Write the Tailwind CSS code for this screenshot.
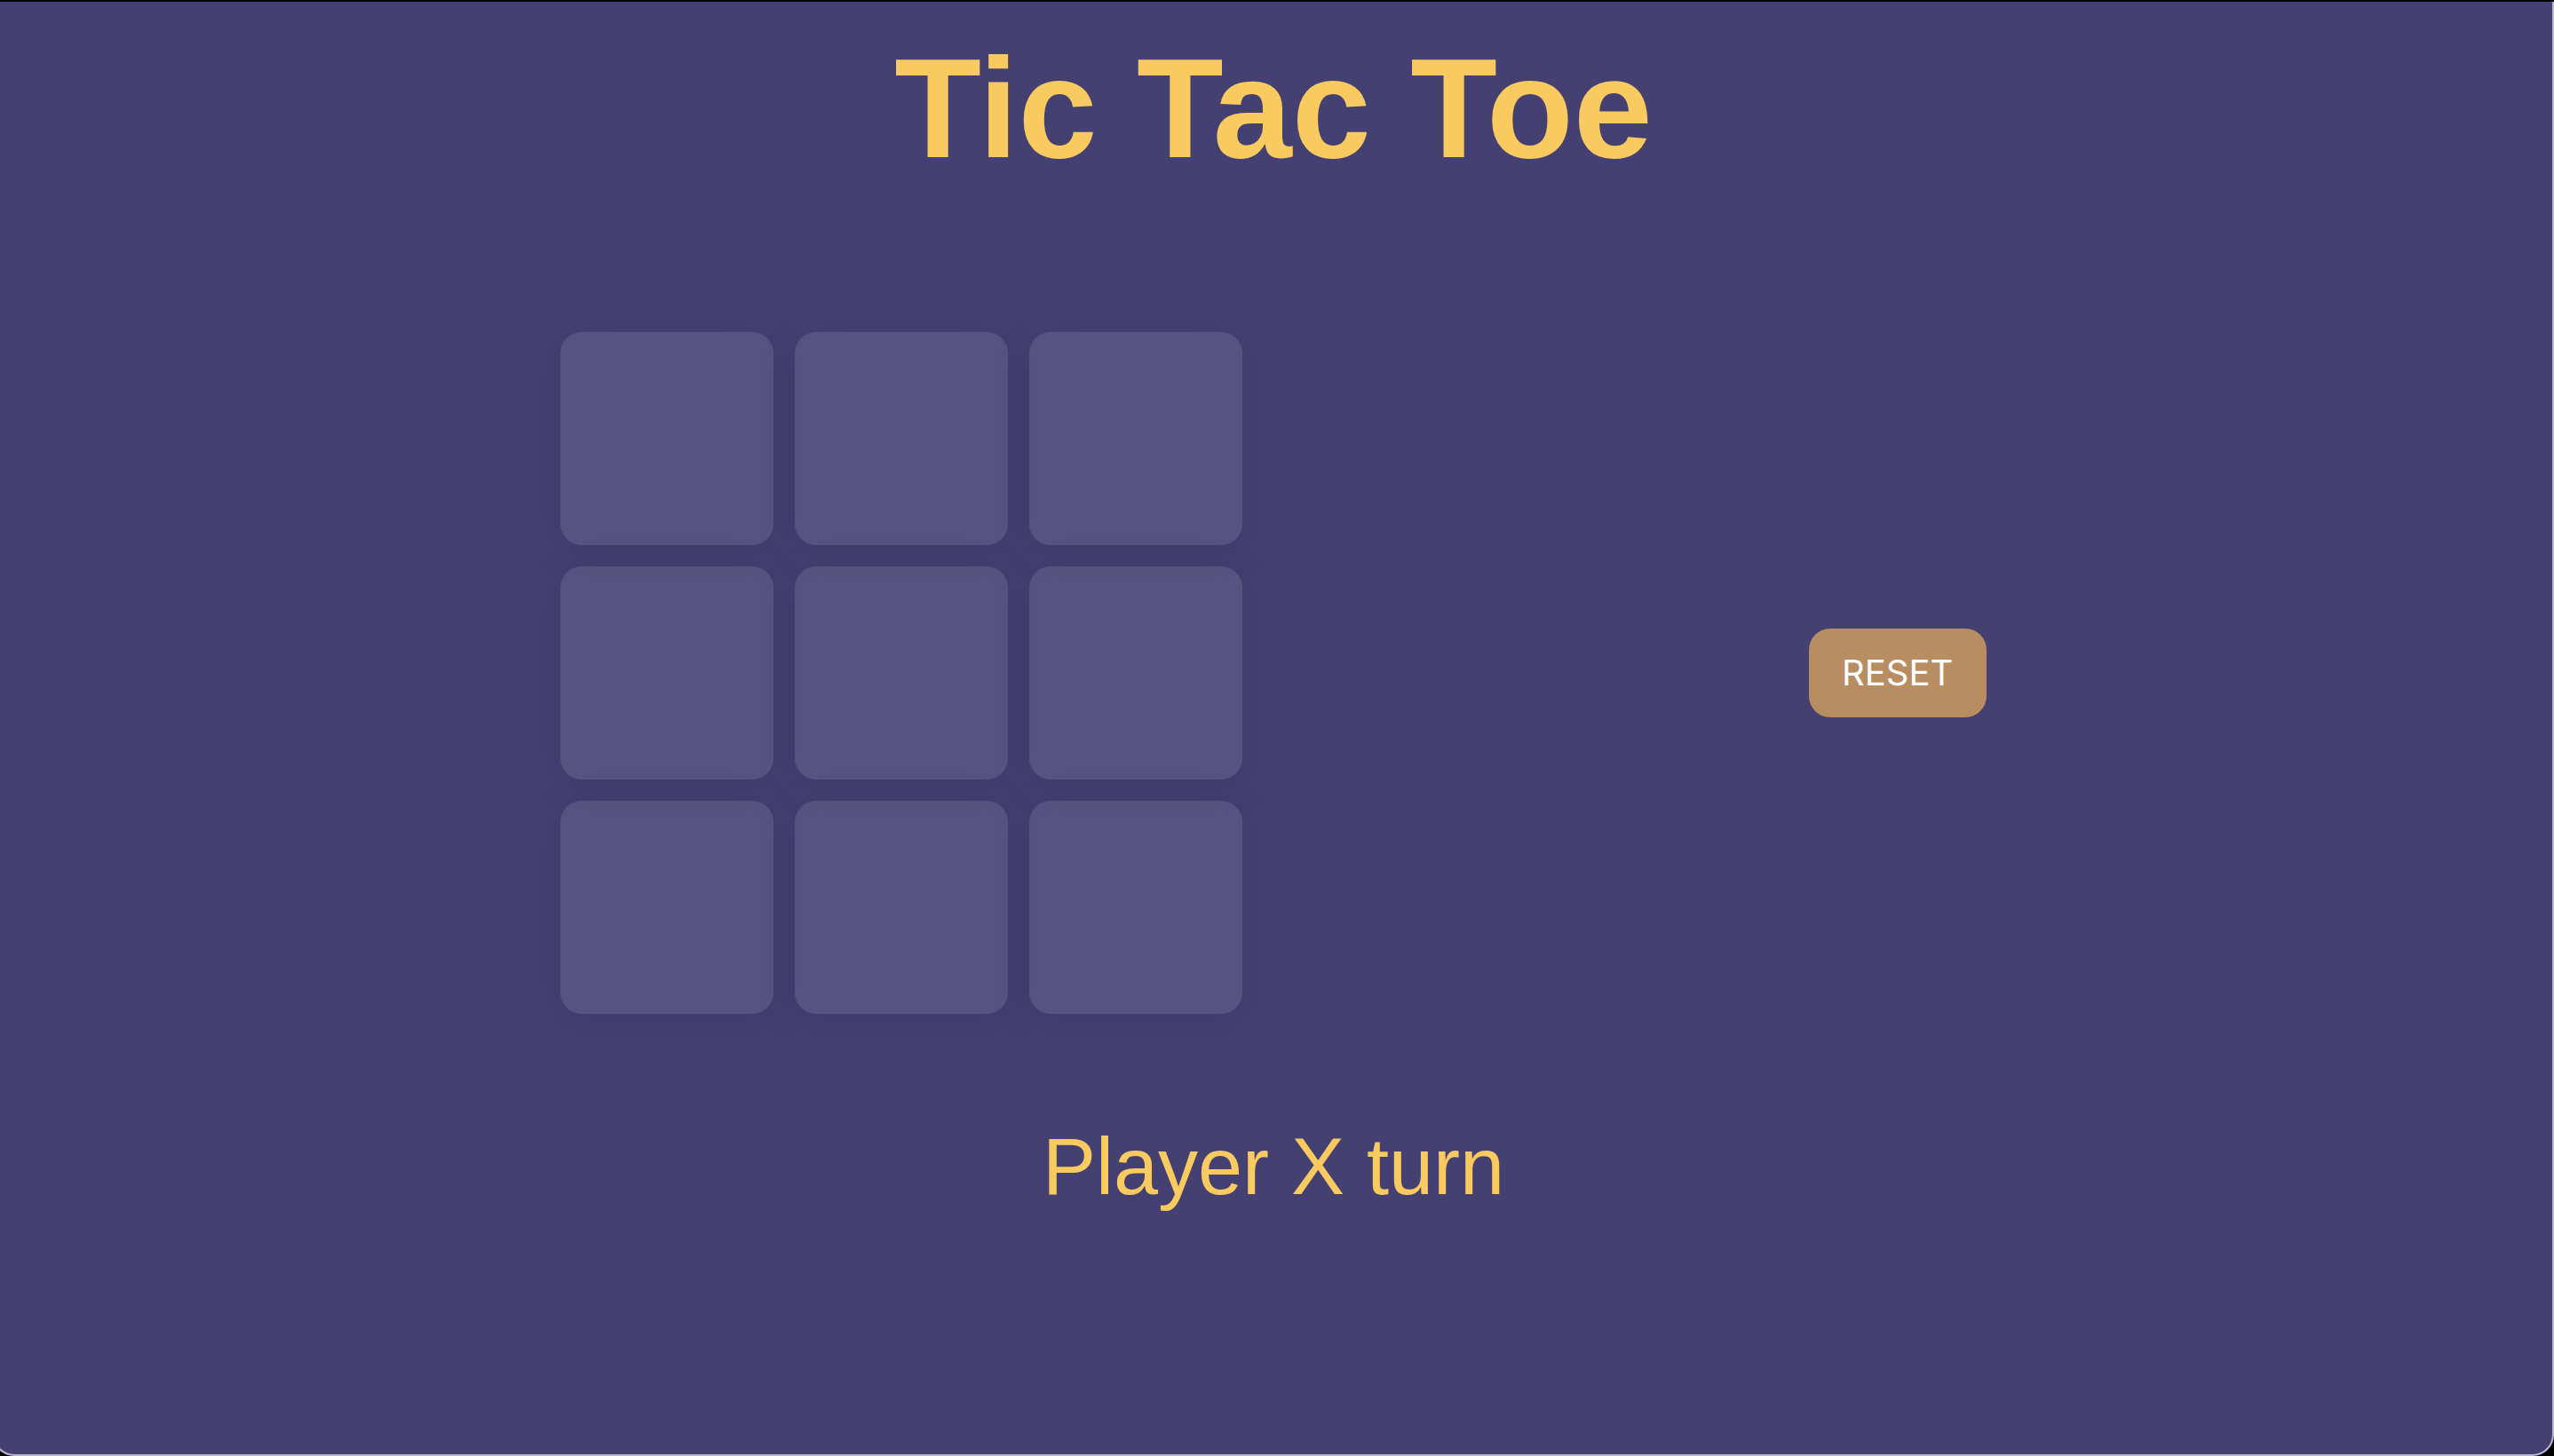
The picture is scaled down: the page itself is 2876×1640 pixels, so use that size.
<!DOCTYPE html>
<html lang="en">
<head>
<meta charset="utf-8">
<meta name="viewport" content="width=device-width, initial-scale=1">
<title>Tic Tac Toe</title>
<script src="https://cdn.jsdelivr.net/npm/@tailwindcss/browser@4"></script>
</head>
<body class="overflow-hidden bg-black">
<div class="-ml-2 flex h-screen flex-col border-t-2 border-t-black">
  <main class="flex grow flex-col items-center rounded-b-3xl border-x-2 border-b-2 border-[#bab6cc] bg-[#454072] pt-7 font-['Helvetica_Neue','Liberation_Sans',sans-serif] text-[#f8ca60]">
    <h1 class="text-[160px] leading-[184px] font-bold">Tic Tac Toe</h1>
    <section class="mt-40 flex w-full items-center justify-evenly" aria-label="Game">
      <div class="grid grid-cols-3 gap-6">
        <button aria-label="Row 1, column 1" class="size-60 rounded-3xl bg-white/10 shadow-[0_8px_48px_rgba(20,0,50,0.1)] backdrop-blur-[10px]"></button>
        <button aria-label="Row 1, column 2" class="size-60 rounded-3xl bg-white/10 shadow-[0_8px_48px_rgba(20,0,50,0.1)] backdrop-blur-[10px]"></button>
        <button aria-label="Row 1, column 3" class="size-60 rounded-3xl bg-white/10 shadow-[0_8px_48px_rgba(20,0,50,0.1)] backdrop-blur-[10px]"></button>
        <button aria-label="Row 2, column 1" class="size-60 rounded-3xl bg-white/10 shadow-[0_8px_48px_rgba(20,0,50,0.1)] backdrop-blur-[10px]"></button>
        <button aria-label="Row 2, column 2" class="size-60 rounded-3xl bg-white/10 shadow-[0_8px_48px_rgba(20,0,50,0.1)] backdrop-blur-[10px]"></button>
        <button aria-label="Row 2, column 3" class="size-60 rounded-3xl bg-white/10 shadow-[0_8px_48px_rgba(20,0,50,0.1)] backdrop-blur-[10px]"></button>
        <button aria-label="Row 3, column 1" class="size-60 rounded-3xl bg-white/10 shadow-[0_8px_48px_rgba(20,0,50,0.1)] backdrop-blur-[10px]"></button>
        <button aria-label="Row 3, column 2" class="size-60 rounded-3xl bg-white/10 shadow-[0_8px_48px_rgba(20,0,50,0.1)] backdrop-blur-[10px]"></button>
        <button aria-label="Row 3, column 3" class="size-60 rounded-3xl bg-white/10 shadow-[0_8px_48px_rgba(20,0,50,0.1)] backdrop-blur-[10px]"></button>
      </div>
      <button class="h-25 w-50 rounded-3xl bg-[#b88d62] font-[Inter,sans-serif] text-[40px] text-white">RESET</button>
    </section>
    <p class="mt-30 text-[90px] leading-[104px]" aria-live="polite">Player X turn</p>
  </main>
</div>
</body>
</html>
